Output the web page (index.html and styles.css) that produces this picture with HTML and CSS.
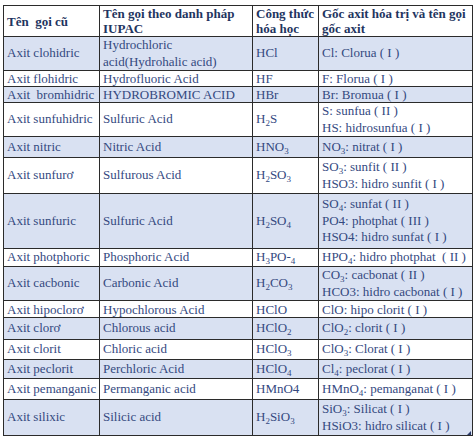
FILE: index.html
```html
<!DOCTYPE html>
<html lang="vi">
<head>
<meta charset="utf-8">
<title>Axit</title>
<link rel="stylesheet" href="styles.css">
</head>
<body>
<div class="wrap">
<table class="acid">
  <colgroup>
    <col class="c1"><col class="c2"><col class="c3"><col class="c4">
  </colgroup>
  <tr class="head">
    <th>Tên&nbsp; gọi cũ</th>
    <th>Tên gọi theo danh pháp IUPAC</th>
    <th>Công thức hóa học</th>
    <th>Gốc axit hóa trị và tên gọi gốc axit</th>
  </tr>
  <tr class="blue h34">
    <td>Axit clohidric</td>
    <td>Hydrochloric<br>acid(Hydrohalic acid)</td>
    <td>HCl</td>
    <td>Cl: Clorua ( I )</td>
  </tr>
  <tr class="h16">
    <td>Axit flohidric</td>
    <td>Hydrofluoric Acid</td>
    <td>HF</td>
    <td>F: Florua ( I )</td>
  </tr>
  <tr class="blue h16">
    <td>Axit&nbsp; bromhidric</td>
    <td>HYDROBROMIC ACID</td>
    <td>HBr</td>
    <td>Br: Bromua ( I )</td>
  </tr>
  <tr class="h34">
    <td>Axit sunfuhidric</td>
    <td>Sulfuric Acid</td>
    <td>H<sub>2</sub>S</td>
    <td>S: sunfua ( II )<br>HS: hidrosunfua ( I )</td>
  </tr>
  <tr class="blue h21">
    <td>Axit nitric</td>
    <td>Nitric Acid</td>
    <td>HNO<sub>3</sub></td>
    <td>NO<sub>3</sub>: nitrat ( I )</td>
  </tr>
  <tr class="h36">
    <td>Axit sunfurơ</td>
    <td>Sulfurous Acid</td>
    <td>H<sub>2</sub>SO<sub>3</sub></td>
    <td>SO<sub>3</sub>: sunfit ( II )<br>HSO3: hidro sunfit ( I )</td>
  </tr>
  <tr class="blue h55">
    <td>Axit sunfuric</td>
    <td>Sulfuric Acid</td>
    <td>H<sub>2</sub>SO<sub>4</sub></td>
    <td>SO<sub>4</sub>: sunfat ( II )<br>PO4: photphat ( III )<br>HSO4: hidro sunfat ( I )</td>
  </tr>
  <tr class="h18">
    <td>Axit photphoric</td>
    <td>Phosphoric Acid</td>
    <td>H<sub>3</sub>PO-<sub>4</sub></td>
    <td>HPO<sub>4</sub>: hidro photphat&nbsp; ( II )</td>
  </tr>
  <tr class="blue h34">
    <td>Axit cacbonic</td>
    <td>Carbonic Acid</td>
    <td>H<sub>2</sub>CO<sub>3</sub></td>
    <td>CO<sub>3</sub>: cacbonat ( II )<br>HCO3: hidro cacbonat ( I )</td>
  </tr>
  <tr class="h17">
    <td>Axit hipoclorơ</td>
    <td>Hypochlorous Acid</td>
    <td>HClO</td>
    <td>ClO: hipo clorit ( I )</td>
  </tr>
  <tr class="blue h22">
    <td>Axit clorơ</td>
    <td>Chlorous acid</td>
    <td>HClO<sub>2</sub></td>
    <td>ClO<sub>2</sub>: clorit ( I )</td>
  </tr>
  <tr class="h20">
    <td>Axit clorit</td>
    <td>Chloric acid</td>
    <td>HClO<sub>3</sub></td>
    <td>ClO<sub>3</sub>: Clorat ( I )</td>
  </tr>
  <tr class="blue h19">
    <td>Axit peclorit</td>
    <td>Perchloric Acid</td>
    <td>HClO<sub>4</sub></td>
    <td>Cl<sub>4</sub>: peclorat ( I )</td>
  </tr>
  <tr class="h21">
    <td>Axit pemanganic</td>
    <td>Permanganic acid</td>
    <td>HMnO4</td>
    <td>HMnO<sub>4</sub>: pemanganat ( I )</td>
  </tr>
  <tr class="blue h36">
    <td>Axit silixic</td>
    <td>Silicic acid</td>
    <td>H<sub>2</sub>SiO<sub>3</sub></td>
    <td>SiO<sub>3</sub>: Silicat ( I )<br>HSiO3: hidro silicat ( I )</td>
  </tr>
</table>
</div>
</body>
</html>
```
FILE: styles.css
```css
html, body {
  background: #ffffff;
}
body {
  margin: 5px 0 0 3px;
  font-family: "Liberation Serif", "Times New Roman", serif;
  font-size: 13px;
  color: #34497f;
}
.wrap {
  position: relative;
  width: 469px;
}
.wrap::after {
  content: "";
  position: absolute;
  right: 1px;
  bottom: 1px;
  width: 0;
  height: 0;
  border-left: 4px solid transparent;
  border-bottom: 4px solid #2a3a6a;
}
.acid {
  border-collapse: collapse;
  table-layout: fixed;
  width: 469px;
}
.c1 { width: 96px; }
.c2 { width: 153px; }
.c3 { width: 66px; }
.c4 { width: 154px; }
.acid th,
.acid td {
  border: 1px solid #2b2b2b;
  padding: 0 2px 0 3px;
  vertical-align: middle;
  text-align: left;
  line-height: 16.5px;
  white-space: nowrap;
  overflow: hidden;
}
.acid th {
  font-weight: bold;
  color: #1f3561;
  line-height: 15px;
  white-space: normal;
}
.head { height: 31px; }
.blue td { background: #d9e1f2; }
.h16 { height: 16px; }
.h16 td { line-height: 15px; }
.h17 { height: 17px; }
.h17 td { line-height: 15px; }
.h18 { height: 18px; }
.h19 { height: 19px; }
.h20 { height: 20px; }
.h21 { height: 21px; }
.h22 { height: 22px; }
.h34 { height: 34px; }
.h36 { height: 36px; }
.h55 { height: 55px; }
.acid sub {
  font-size: 9px;
  line-height: 0;
  vertical-align: -3px;
}
```
